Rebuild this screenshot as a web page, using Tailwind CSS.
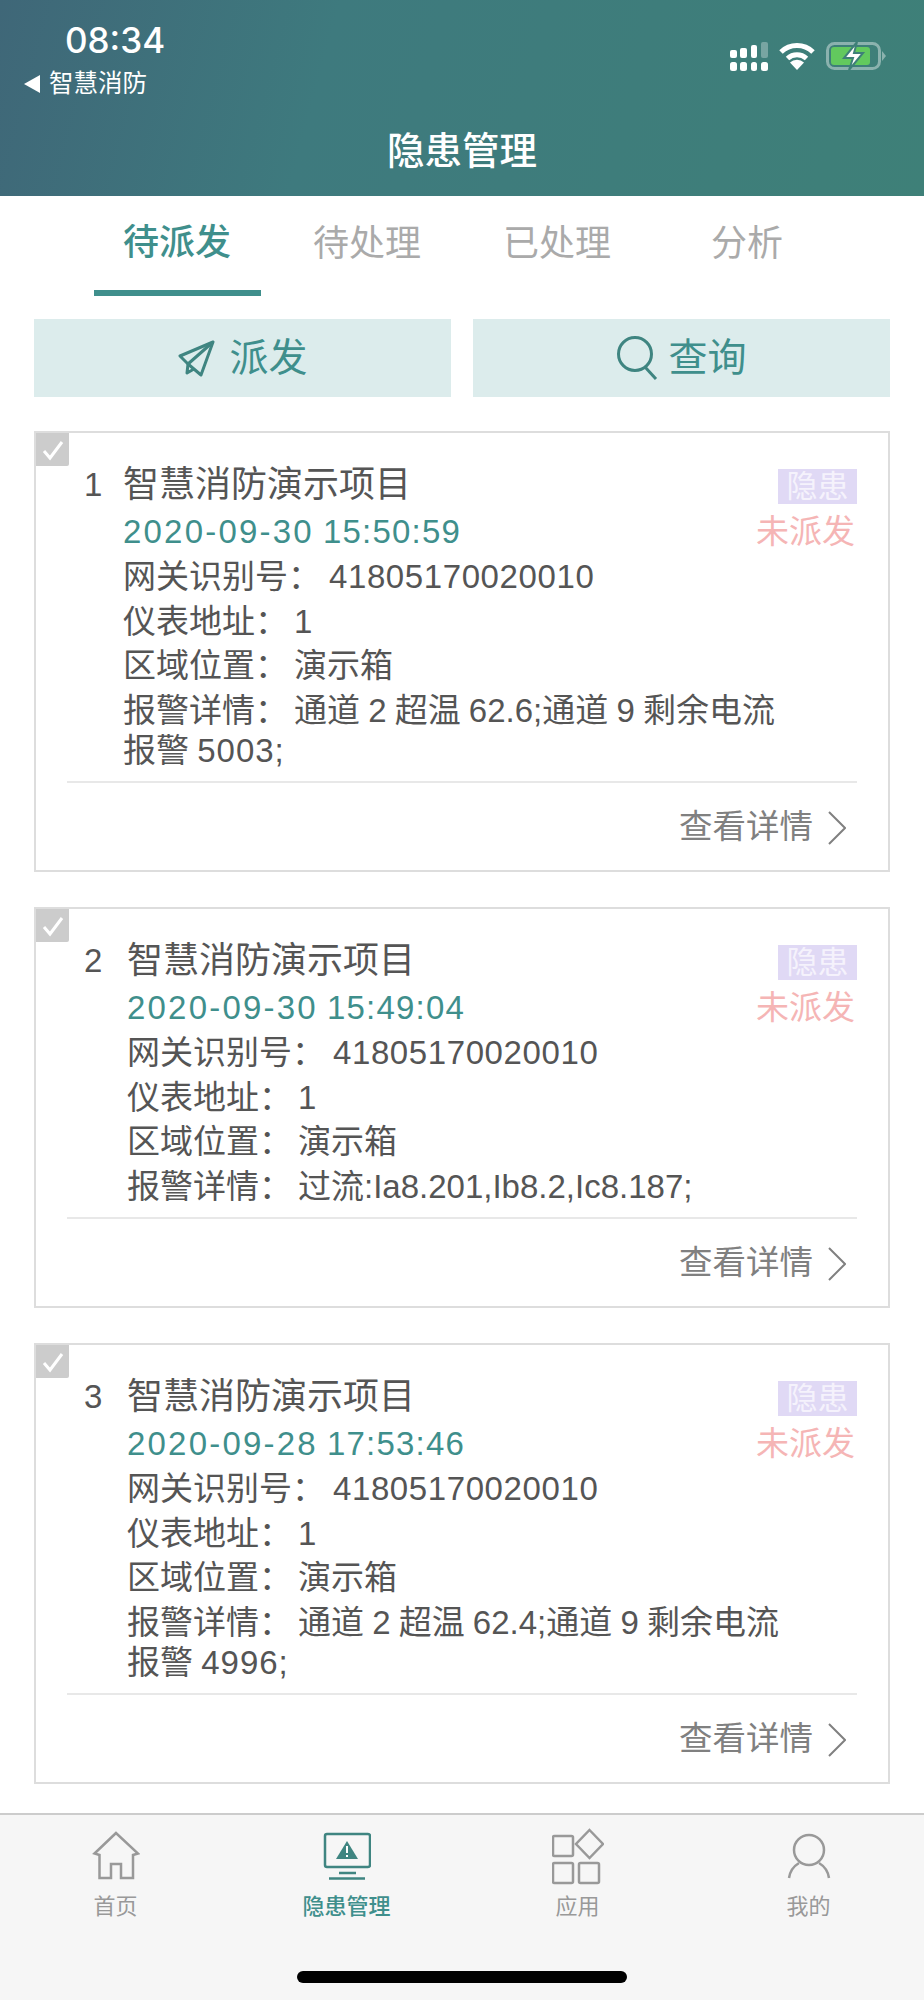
<!DOCTYPE html>
<html lang="zh-CN">
<head>
  <meta charset="UTF-8" />
  <meta name="viewport" content="width=device-width, initial-scale=1.0" />
  <title>隐患管理</title>
  <script src="https://cdn.jsdelivr.net/npm/@tailwindcss/browser@4"></script>
</head>
<body class="bg-white font-['Liberation_Sans','Noto_Sans_CJK_SC',sans-serif] text-[33px] text-[#555]">
<div class="w-[924px] h-[2000px] flex flex-col overflow-hidden">

  <!-- header -->
  <header class="relative h-[196px] shrink-0 bg-[linear-gradient(105deg,#3f6778_0%,#3e7a7e_35%,#3e8078_100%)] text-white">
    <div class="flex justify-between">
      <div class="pt-[19px]">
        <div class="pl-[65px] font-['Inter',sans-serif] font-medium text-[35px] leading-[42px]">08:34</div>
        <div class="flex items-center pl-[24px] h-[42px] mt-[2px]">
          <svg width="16" height="18" viewBox="0 0 16 18" class="mr-[9px]"><path d="M0 9 L16 0 V18 Z" fill="#fff"/></svg>
          <span class="text-[24.5px] leading-[42px]">智慧消防</span>
        </div>
      </div>
      <div class="flex items-start gap-[11px] pt-[42px] pr-[38px]">
        <svg width="38" height="29" viewBox="0 0 38 29">
          <g fill="#fff">
            <rect x="0" y="8" width="7" height="8" rx="2"/><rect x="10" y="6" width="7" height="10" rx="2"/><rect x="21" y="3" width="6" height="13" rx="2"/>
            <rect x="0" y="20" width="7" height="9" rx="2.5"/><rect x="10" y="20" width="7" height="9" rx="2.5"/><rect x="21" y="20" width="6" height="9" rx="2.5"/><rect x="31" y="20" width="7" height="9" rx="2.5"/>
          </g>
          <rect x="31" y="0" width="7" height="16" rx="2" fill="#fff" fill-opacity=".3"/>
        </svg>
        <svg width="36" height="28" viewBox="0 0 36 28" fill="none" stroke="#fff" stroke-width="5">
          <path d="M2 10 A23 23 0 0 1 34 10"/><path d="M8.5 16.5 A14 14 0 0 1 27.500 16.500"/>
          <path d="M18 28 L11 20.500 A10 10 0 0 1 25 20.500 Z" fill="#fff" stroke="none"/>
        </svg>
        <svg width="60" height="28" viewBox="0 0 60 28">
          <rect x="1.500" y="1.500" width="52" height="25" rx="7" fill="none" stroke="#fff" stroke-opacity=".4" stroke-width="3"/>
          <path d="M56 9 L60 14 L56 19 Z" fill="#fff" fill-opacity=".4"/>
          <rect x="5" y="5" width="39" height="18" rx="3" fill="#62c95e"/>
          <path d="M31 0 L18 16 H27 L23 28 L37 11 H28 Z" fill="#fff" stroke="#3e8078" stroke-width="2"/>
        </svg>
      </div>
    </div>
    <div class="text-center text-[37.500px] font-medium leading-[50px] mt-[21px]">隐患管理</div>
  </header>

  <!-- tabs -->
  <nav class="flex pl-[82px] h-[100px] shrink-0">
    <div class="w-[190px] flex flex-col items-center text-[#3f8f8c] pt-[24px]">
      <span class="leading-[46px] text-[36px] font-medium">待派发</span>
      <span class="mt-auto w-[167px] h-[6px] bg-[#3f8f8c]"></span>
    </div>
    <div class="w-[190px] text-center text-[#aaa] pt-[24px]"><span class="leading-[46px] text-[36px]">待处理</span></div>
    <div class="w-[190px] text-center text-[#aaa] pt-[24px]"><span class="leading-[46px] text-[36px]">已处理</span></div>
    <div class="w-[190px] text-center text-[#aaa] pt-[24px]"><span class="leading-[46px] text-[36px]">分析</span></div>
  </nav>

  <!-- actions -->
  <div class="flex gap-[22px] px-[34px] mt-[23px] shrink-0">
    <button class="flex-1 h-[78px] bg-[#dcecec] flex items-center justify-center gap-[14px] text-[#3f8f8c] text-[39px]">
      <svg width="38" height="38" viewBox="0 0 38 38" fill="none" stroke="#3f8581" stroke-width="3" stroke-linejoin="round"><path d="M36 3 L3 17 L11 25 L24 36 Z"/><path d="M36 3 L11 25 L10 34 L17 30"/></svg>
      <span>派发</span>
    </button>
    <button class="flex-1 h-[78px] bg-[#dcecec] flex items-center justify-center gap-[10px] text-[#3f8f8c] text-[39px]">
      <svg width="42" height="44" viewBox="0 0 42 44" fill="none" stroke="#3f8581" stroke-width="3"><circle cx="19" cy="18" r="16.500"/><path d="M29 31 L40 43"/></svg>
      <span>查询</span>
    </button>
  </div>

  <!-- list -->
  <div class="px-[34px] pt-[34px] flex flex-col gap-[35px]">

    <section class="relative border-2 border-[#ddd] h-[441px]">
      <span class="absolute left-0 top-0 w-[33px] h-[33px] bg-[#ccc] rounded-br-[2px] flex items-center justify-center">
        <svg width="24" height="24" viewBox="0 0 24 24" fill="none" stroke="#fff" stroke-width="3"><path d="M3 13 L9 20 L21 4"/></svg>
      </span>
      <div class="px-[31px] pt-[26px]">
        <div class="flex pl-[17px]">
          <div class="w-[39px] leading-[48px] pt-[2px] text-[#555]">1</div>
          <div class="flex-1">
            <div class="flex justify-between h-[48px] leading-[52px]">
              <span class="text-[36px]">智慧消防演示项目</span>
              <span class="self-start mt-[10px] h-[35px] w-[79px] text-center leading-[35px] bg-[#e0d9f5] text-[#f5f2fc] text-[31px]">隐患</span>
            </div>
            <div class="flex justify-between h-[48px] leading-[50px]">
              <span class="text-[#3f8f8c]"><span class="tracking-[2.200px]">2020-09-30</span> <span class="tracking-[1.200px]">15:50:59</span></span>
              <span class="text-[#f5b5b5] pr-[2px]">未派发</span>
            </div>
            <div class="leading-[44.500px]">网关识别号：<span class="ml-[8px] tracking-[0.600px]">41805170020010</span></div>
            <div class="leading-[44.500px]">仪表地址：<span class="ml-[6px]">1</span></div>
            <div class="leading-[44.500px]">区域位置：<span class="ml-[6px]">演示箱</span></div>
            <div class="leading-[40px] mt-[2px] [word-spacing:-1px]">报警详情：<span class="ml-[6px]">通道 2 超温 62.6;通道 9 剩余电流</span><br />报警 <span class="tracking-[1px]">5003;</span></div>
          </div>
        </div>
        <div class="h-[2px] bg-[#e8e8e8] mt-[10px]"></div>
        <div class="flex justify-end items-center gap-[15px] h-[90px] pr-[11px] text-[#808080] text-[33.500px]">
          <span>查看详情</span>
          <svg width="18" height="34" viewBox="0 0 18 34" fill="none" stroke="#808080" stroke-width="2"><path d="M1 1 L17 17 L1 33"/></svg>
        </div>
      </div>
    </section>

    <section class="relative border-2 border-[#ddd] h-[401px]">
      <span class="absolute left-0 top-0 w-[33px] h-[33px] bg-[#ccc] rounded-br-[2px] flex items-center justify-center">
        <svg width="24" height="24" viewBox="0 0 24 24" fill="none" stroke="#fff" stroke-width="3"><path d="M3 13 L9 20 L21 4"/></svg>
      </span>
      <div class="px-[31px] pt-[26px]">
        <div class="flex pl-[17px]">
          <div class="w-[43px] leading-[48px] pt-[2px] text-[#555]">2</div>
          <div class="flex-1">
            <div class="flex justify-between h-[48px] leading-[52px]">
              <span class="text-[36px]">智慧消防演示项目</span>
              <span class="self-start mt-[10px] h-[35px] w-[79px] text-center leading-[35px] bg-[#e0d9f5] text-[#f5f2fc] text-[31px]">隐患</span>
            </div>
            <div class="flex justify-between h-[48px] leading-[50px]">
              <span class="text-[#3f8f8c]"><span class="tracking-[2.200px]">2020-09-30</span> <span class="tracking-[1.200px]">15:49:04</span></span>
              <span class="text-[#f5b5b5] pr-[2px]">未派发</span>
            </div>
            <div class="leading-[44.500px]">网关识别号：<span class="ml-[8px] tracking-[0.600px]">41805170020010</span></div>
            <div class="leading-[44.500px]">仪表地址：<span class="ml-[6px]">1</span></div>
            <div class="leading-[44.500px]">区域位置：<span class="ml-[6px]">演示箱</span></div>
            <div class="leading-[40px] mt-[2px]">报警详情：<span class="ml-[6px]">过流:Ia8.201,Ib8.2,Ic8.187;</span></div>
          </div>
        </div>
        <div class="h-[2px] bg-[#e8e8e8] mt-[10px]"></div>
        <div class="flex justify-end items-center gap-[15px] h-[90px] pr-[11px] text-[#808080] text-[33.500px]">
          <span>查看详情</span>
          <svg width="18" height="34" viewBox="0 0 18 34" fill="none" stroke="#808080" stroke-width="2"><path d="M1 1 L17 17 L1 33"/></svg>
        </div>
      </div>
    </section>

    <section class="relative border-2 border-[#ddd] h-[441px]">
      <span class="absolute left-0 top-0 w-[33px] h-[33px] bg-[#ccc] rounded-br-[2px] flex items-center justify-center">
        <svg width="24" height="24" viewBox="0 0 24 24" fill="none" stroke="#fff" stroke-width="3"><path d="M3 13 L9 20 L21 4"/></svg>
      </span>
      <div class="px-[31px] pt-[26px]">
        <div class="flex pl-[17px]">
          <div class="w-[43px] leading-[48px] pt-[2px] text-[#555]">3</div>
          <div class="flex-1">
            <div class="flex justify-between h-[48px] leading-[52px]">
              <span class="text-[36px]">智慧消防演示项目</span>
              <span class="self-start mt-[10px] h-[35px] w-[79px] text-center leading-[35px] bg-[#e0d9f5] text-[#f5f2fc] text-[31px]">隐患</span>
            </div>
            <div class="flex justify-between h-[48px] leading-[50px]">
              <span class="text-[#3f8f8c]"><span class="tracking-[2.200px]">2020-09-28</span> <span class="tracking-[1.200px]">17:53:46</span></span>
              <span class="text-[#f5b5b5] pr-[2px]">未派发</span>
            </div>
            <div class="leading-[44.500px]">网关识别号：<span class="ml-[8px] tracking-[0.600px]">41805170020010</span></div>
            <div class="leading-[44.500px]">仪表地址：<span class="ml-[6px]">1</span></div>
            <div class="leading-[44.500px]">区域位置：<span class="ml-[6px]">演示箱</span></div>
            <div class="leading-[40px] mt-[2px] [word-spacing:-1px]">报警详情：<span class="ml-[6px]">通道 2 超温 62.4;通道 9 剩余电流</span><br />报警 <span class="tracking-[1px]">4996;</span></div>
          </div>
        </div>
        <div class="h-[2px] bg-[#e8e8e8] mt-[10px]"></div>
        <div class="flex justify-end items-center gap-[15px] h-[90px] pr-[11px] text-[#808080] text-[33.500px]">
          <span>查看详情</span>
          <svg width="18" height="34" viewBox="0 0 18 34" fill="none" stroke="#808080" stroke-width="2"><path d="M1 1 L17 17 L1 33"/></svg>
        </div>
      </div>
    </section>
  </div>

  <!-- bottom nav -->
  <footer class="relative mt-auto h-[187px] shrink-0 bg-[#f6f6f6] border-t-2 border-[#ccc] grid grid-cols-4 text-[22px] text-[#999]">
    <div class="flex flex-col items-center">
      <div class="h-[75px] pt-[15px]">
        <svg width="48" height="50" viewBox="0 0 48 50" fill="none" stroke="#999" stroke-width="2.500"><path d="M24 3 L2.500 23.500 L7.500 25 V48 H19 V34 H29 V48 H41 V25 L46 23.500 Z"/></svg>
      </div>
      <span class="leading-[34px]">首页</span>
    </div>
    <div class="flex flex-col items-center text-[#3f8f8c]">
      <div class="h-[75px] pt-[15px]">
        <svg width="48" height="50" viewBox="0 0 48 50" fill="none" stroke="#3f8581" stroke-width="2.500"><rect x="2" y="4" width="45" height="33" rx="2"/><path d="M24 11 L13 29 H35 Z" fill="#3f8581" stroke="none"/><path d="M24 16 V23 M24 25 V27" stroke="#fff" stroke-width="2"/><path d="M16 43 H33 M6 48.500 H42"/></svg>
      </div>
      <span class="leading-[34px] font-medium">隐患管理</span>
    </div>
    <div class="flex flex-col items-center">
      <div class="h-[75px] pt-[13px]">
        <svg width="52" height="58" viewBox="0 0 52 58" fill="none" stroke="#999" stroke-width="2.500"><rect x="1" y="8" width="20" height="20" rx="1.500"/><path d="M37.500 2 L51 16 L37.500 30 L24 16 Z"/><rect x="1" y="35" width="20" height="20" rx="1.500"/><rect x="27" y="35" width="20" height="20" rx="1.500"/></svg>
      </div>
      <span class="leading-[34px]">应用</span>
    </div>
    <div class="flex flex-col items-center">
      <div class="h-[75px] pt-[15px]">
        <svg width="44" height="50" viewBox="0 0 44 50" fill="none" stroke="#999" stroke-width="2.500"><circle cx="22" cy="20" r="15"/><path d="M2 48 C3 41 7 36 12 33 M42 48 C41 41 37 36 32 33"/></svg>
      </div>
      <span class="leading-[34px]">我的</span>
    </div>
    <div class="absolute left-[297px] top-[156px] w-[330px] h-[12px] rounded-full bg-black"></div>
  </footer>
</div>
</body>
</html>
